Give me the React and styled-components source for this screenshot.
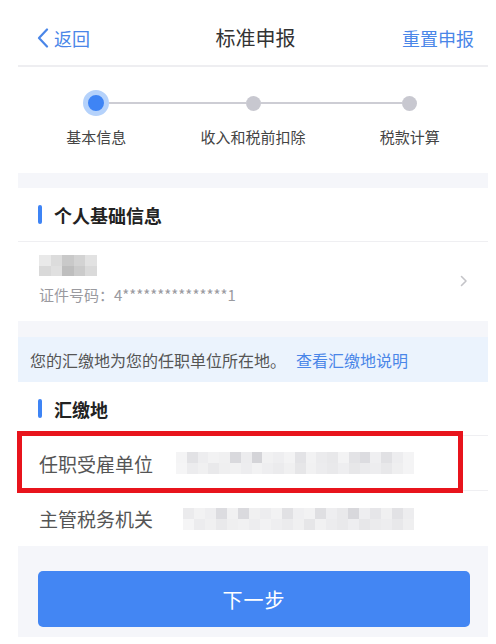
import React from "react";
import styled, { createGlobalStyle } from "styled-components";

const GlobalStyle = createGlobalStyle`
  html, body { margin: 0; padding: 0; background: #fff; }
  body { font-family: "Noto Sans CJK SC", "Noto Sans", sans-serif; -webkit-font-smoothing: antialiased; }
`;

const BLUE = "#4a86e8";

const Page = styled.div`
  width: 470px;
  margin: 0 8px 0 18px;
  background: #fff;
`;

const Header = styled.header`
  height: 55px;
  padding: 10px 14px 0 19px;
  display: grid;
  grid-template-columns: 1fr auto 1fr;
  align-items: center;
  border-bottom: 2px solid #eeeef1;
`;

const BackLink = styled.div`
  display: flex;
  align-items: center;
  gap: 5px;
  color: ${BLUE};
  font-size: 18px;
  line-height: 1;
`;

const Title = styled.div`
  font-size: 20px;
  color: #333;
  line-height: 1;
`;

const HeaderAction = styled.div`
  justify-self: end;
  font-size: 18px;
  color: ${BLUE};
  line-height: 1;
`;

const Stepper = styled.div`
  height: 106px;
  padding-top: 23px;
  box-sizing: border-box;
  display: grid;
  grid-template-columns: repeat(3, 1fr);
`;

const Step = styled.div`
  display: flex;
  flex-direction: column;
  align-items: center;
`;

const Track = styled.div`
  width: 100%;
  height: 26px;
  display: flex;
  align-items: center;
`;

const TrackLine = styled.div`
  flex: 1;
  height: 1.5px;
  background: ${(p) => (p.$hidden ? "transparent" : "#cdcdd4")};
`;

const Dot = styled.div`
  box-sizing: border-box;
  width: ${(p) => (p.$active ? "26px" : "15px")};
  height: ${(p) => (p.$active ? "26px" : "15px")};
  border-radius: 50%;
  background: ${(p) => (p.$active ? "#3e84f5" : "#c8c8d0")};
  border: ${(p) => (p.$active ? "5px solid #b5d2fb" : "none")};
`;

const StepLabel = styled.div`
  margin-top: 11px;
  font-size: 15px;
  line-height: 20px;
  color: #444;
`;

const Band = styled.div`
  height: ${(p) => p.$h}px;
  background: #f5f6fa;
`;

const SectionHead = styled.div`
  height: 54px;
  box-sizing: border-box;
  padding-left: 20px;
  display: flex;
  align-items: center;
  border-bottom: 1px solid #efeff2;
`;

const SectionBar = styled.span`
  width: 4px;
  height: 19px;
  border-radius: 2px;
  background: #3e84f5;
`;

const SectionTitle = styled.span`
  margin-left: 12px;
  font-size: 18px;
  font-weight: 700;
  color: #222;
`;

const PersonRow = styled.div`
  height: 79px;
  box-sizing: border-box;
  padding: 13px 20px 0 21px;
  display: flex;
  justify-content: space-between;
`;

const PersonInfo = styled.div`
  display: flex;
  flex-direction: column;
`;

const IdText = styled.div`
  margin-top: 9px;
  font-size: 15px;
  line-height: 20px;
  color: #9a9a9f;
`;

const Chevron = styled.div`
  align-self: center;
  margin-top: -14px;
  display: flex;
`;

const Mosaic = styled.div`
  display: grid;
  grid-template-columns: repeat(${(p) => p.$cols}, ${(p) => p.$cw}px);
  grid-auto-rows: ${(p) => p.$ch}px;
  filter: blur(0.6px);
`;

const Cell = styled.div`
  background: ${(p) => p.$c};
`;

const Banner = styled.div`
  height: 45px;
  background: #ebf3fd;
  padding-left: 12px;
  display: flex;
  align-items: center;
  font-size: 16px;
  color: #555;
`;

const BannerLink = styled.span`
  margin-left: 10px;
  color: ${BLUE};
`;

const FieldRow = styled.div`
  position: relative;
  height: 55px;
  box-sizing: border-box;
  padding-left: 21px;
  display: flex;
  align-items: center;
  border-bottom: ${(p) => (p.$last ? "none" : "1px solid #efeff2")};
`;

const FieldLabel = styled.div`
  width: ${(p) => p.$w}px;
  flex-shrink: 0;
  font-size: 19px;
  color: #555;
`;

const Highlight = styled.div`
  position: absolute;
  left: -1px;
  top: -5px;
  right: 25px;
  bottom: -3px;
  border: 5px solid #e8141c;
  pointer-events: none;
`;

const Footer = styled.div`
  background: #f5f6fa;
  height: 91px;
  box-sizing: border-box;
  padding: 25px 18px 0 20px;
`;

const PrimaryButton = styled.button`
  width: 100%;
  height: 56px;
  border: none;
  border-radius: 5px;
  background: #4386f3;
  color: #fff;
  font-family: inherit;
  font-size: 20px;
  letter-spacing: 1px;
`;

const nameCells = [
  "#e9e9e9", "#dcdcdc", "#c9c9c9", "#d3d3d3", "#e2e2e2",
  "#d9d9d9", "#e0e0e0", "#bebebe", "#cbcbcb", "#dadada",
];

const valueRowA = [
  "#f4f4f5", "#e2e2e5", "#ededef", "#f2f2f3", "#f0f0f1", "#d9d9dd", "#ececee",
  "#d4d4d8", "#f1f1f2", "#eeeef0", "#f3f3f4", "#e3e3e6", "#f2f2f3", "#ebebed",
  "#e8e8ea", "#f3f3f4", "#e3e3e6", "#dcdce0", "#efeff1", "#e1e1e4", "#ededef", "#f4f4f5",
];
const valueRowB = [
  "#f5f5f6", "#ececee", "#f0f0f1", "#e9e9eb", "#efeff0", "#f1f1f2", "#ededef",
  "#f2f2f3", "#eeeef0", "#ebebed", "#f0f0f1", "#e6e6e8", "#f1f1f2", "#ececee",
  "#e9e9eb", "#eeeef0", "#e7e7e9", "#ebebed", "#ededef", "#e8e8ea", "#efeff0", "#f4f4f5",
];
const valueRowC = [
  "#ebebed", "#f2f2f3", "#eeeef0", "#dcdce0", "#f1f1f2", "#dadade", "#f0f0f1",
  "#ededef", "#f2f2f3", "#e1e1e4", "#efeff1", "#f2f2f3", "#dfdfe2", "#eeeef0",
  "#e9e9eb", "#d8d8dc", "#eeeef0", "#e6e6e9", "#f0f0f1", "#e2e2e5", "#ededef", "#f4f4f5",
];

const MosaicBlock = ({ cells, cols, cw, ch }) => (
  <Mosaic $cols={cols} $cw={cw} $ch={ch}>
    {cells.map((c, i) => (
      <Cell key={i} $c={c} />
    ))}
  </Mosaic>
);

const steps = ["基本信息", "收入和税前扣除", "税款计算"];

export default function App() {
  return (
    <>
      <GlobalStyle />
      <Page>
        <Header>
          <BackLink>
            <svg width="12" height="20" viewBox="0 0 12 20">
              <path d="M10 1.5 L2 10 L10 18.5" fill="none" stroke={BLUE} strokeWidth="2.2" strokeLinecap="round" strokeLinejoin="round" />
            </svg>
            返回
          </BackLink>
          <Title>标准申报</Title>
          <HeaderAction>重置申报</HeaderAction>
        </Header>

        <Stepper>
          {steps.map((s, i) => (
            <Step key={s}>
              <Track>
                <TrackLine $hidden={i === 0} />
                <Dot $active={i === 0} />
                <TrackLine $hidden={i === steps.length - 1} />
              </Track>
              <StepLabel>{s}</StepLabel>
            </Step>
          ))}
        </Stepper>

        <Band $h={15} />

        <SectionHead>
          <SectionBar />
          <SectionTitle>个人基础信息</SectionTitle>
        </SectionHead>

        <PersonRow>
          <PersonInfo>
            <MosaicBlock cells={nameCells} cols={5} cw={11.6} ch={10.5} />
            <IdText>证件号码：4***************1</IdText>
          </PersonInfo>
          <Chevron>
            <svg width="8" height="12" viewBox="0 0 8 12">
              <path d="M1.5 1.5 L6 6 L1.5 10.5" fill="none" stroke="#c4c4c8" strokeWidth="1.6" strokeLinecap="round" strokeLinejoin="round" />
            </svg>
          </Chevron>
        </PersonRow>

        <Band $h={16} />

        <Banner>
          您的汇缴地为您的任职单位所在地。
          <BannerLink>查看汇缴地说明</BannerLink>
        </Banner>

        <SectionHead>
          <SectionBar />
          <SectionTitle>汇缴地</SectionTitle>
        </SectionHead>

        <FieldRow>
          <FieldLabel $w={137}>任职受雇单位</FieldLabel>
          <MosaicBlock cells={[...valueRowA, ...valueRowB]} cols={22} cw={10.8} ch={11} />
          <Highlight />
        </FieldRow>

        <FieldRow $last>
          <FieldLabel $w={144}>主管税务机关</FieldLabel>
          <MosaicBlock cells={[...valueRowC.slice(0, 21), ...valueRowB.slice(0, 21)]} cols={21} cw={11} ch={11} />
        </FieldRow>

        <Footer>
          <PrimaryButton>下一步</PrimaryButton>
        </Footer>
      </Page>
    </>
  );
}
